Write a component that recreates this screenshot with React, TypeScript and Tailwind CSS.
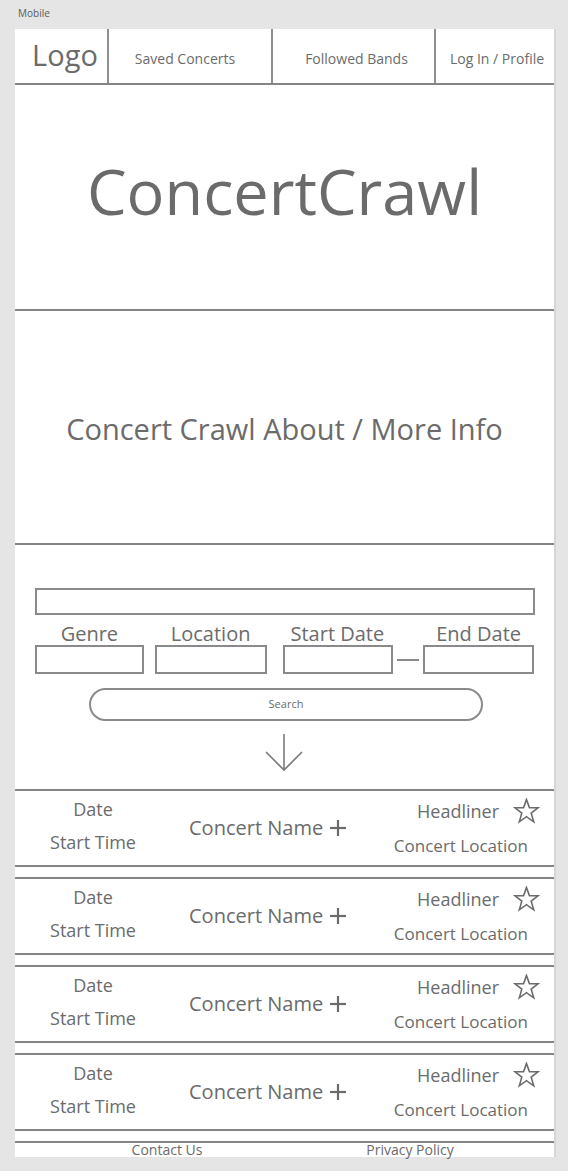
import React from 'react';

const font = { fontFamily: '"Open Sans", "Noto Sans", sans-serif' };

const Star = () => (
  <svg width="27" height="26" viewBox="0 0 27 26" fill="none" stroke="#6b6b6b" strokeWidth="1.6" strokeLinejoin="miter">
    <polygon points="13.5,1.5 16.4,9.6 25,9.8 18.2,15.1 20.7,23.8 13.5,18.7 6.3,23.8 8.8,15.1 2,9.8 10.6,9.6" />
  </svg>
);

const Plus = () => (
  <svg width="18" height="18" viewBox="0 0 18 18" stroke="#6b6b6b" strokeWidth="2.2">
    <line x1="9" y1="1" x2="9" y2="17" />
    <line x1="1" y1="9" x2="17" y2="9" />
  </svg>
);

const ConcertRow = () => (
  <div className="flex h-[78px] border-y-2 border-[#858585] mb-[10px]">
    <div className="flex w-[156px] flex-col items-center pt-[6px] gap-[9px] text-[18px] leading-[24px]">
      <span>Date</span>
      <span>Start Time</span>
    </div>
    <div className="flex flex-1 items-center gap-[6px] pl-[18px] pb-[1px] text-[20px]">
      <span>Concert Name</span>
      <Plus />
    </div>
    <div className="flex flex-col items-end pt-[7px] pr-[14px] gap-[10px] leading-[24px]">
      <div className="flex items-center gap-[14px] text-[18px]">
        <span>Headliner</span>
        <Star />
      </div>
      <span className="mr-[12px] text-[17px]">Concert Location</span>
    </div>
  </div>
);

const SmallBox = ({ w }: { w: string }) => (
  <div className={`h-[29px] border-2 border-[#8a8a8a] ${w}`} />
);

export default function App() {
  return (
    <div className="min-h-screen bg-[#e5e5e5] text-[#6b6b6b]" style={font}>
      <div className="h-[29px] pl-[18px] pt-[6px] text-[10px] leading-[14px] text-[#5a5a5a]">Mobile</div>
      <div className="ml-[15px] w-[541px] bg-white border-r-2 border-[#d6d6d6]">
        {/* header */}
        <div className="flex h-[56px] border-b-2 border-[#858585]">
          <div className="flex w-[94px] items-center justify-center border-r-2 border-[#8f8f8f] pl-[8px] pb-[3px] text-[29px]">
            Logo
          </div>
          <div className="flex w-[164px] items-center justify-center border-r-2 border-[#8f8f8f] pr-[10px] pt-[4px] text-[14px]">
            Saved Concerts
          </div>
          <div className="flex w-[163px] items-center justify-center border-r-2 border-[#8f8f8f] pl-[6px] pt-[4px] text-[14px]">
            Followed Bands
          </div>
          <div className="flex flex-1 items-center justify-center pl-[4px] pt-[4px] text-[14px]">Log In / Profile</div>
        </div>

        {/* hero */}
        <div className="flex h-[226px] items-center justify-center border-b-2 border-[#858585] pb-[12px] text-[63px]">
          ConcertCrawl
        </div>

        {/* about */}
        <div className="flex h-[234px] items-center justify-center border-b-2 border-[#858585] pt-[4px] text-[29px]">
          Concert Crawl About / More Info
        </div>

        {/* search */}
        <div className="flex h-[244px] flex-col px-[20px] pt-[43px]">
          <div className="h-[27px] w-[500px] border-2 border-[#8a8a8a]" />
          <div className="flex h-[30px] items-end text-[20px] leading-[22px]">
            <span className="w-[109px] text-center">Genre</span>
            <span className="ml-[11px] w-[112px] text-center">Location</span>
            <span className="ml-[16px] w-[110px] text-center">Start Date</span>
            <span className="ml-[31px] w-[111px] text-center">End Date</span>
          </div>
          <div className="flex items-center">
            <SmallBox w="w-[109px]" />
            <div className="ml-[11px]">
              <SmallBox w="w-[112px]" />
            </div>
            <div className="ml-[16px]">
              <SmallBox w="w-[110px]" />
            </div>
            <div className="mx-[4px] h-[2px] w-[23px] bg-[#8a8a8a]" />
            <SmallBox w="w-[111px]" />
          </div>
          <div className="ml-[54px] mt-[14px] flex h-[33px] w-[394px] items-center justify-center rounded-full border-2 border-[#8a8a8a] text-[11px]">
            Search
          </div>
          <div className="mt-[12px] flex justify-center pr-[1px]">
            <svg width="40" height="39" viewBox="0 0 40 39" fill="none" stroke="#7a7a7a" strokeWidth="1.6">
              <line x1="20" y1="1" x2="20" y2="37" />
              <polyline points="2,19 20,37 38,19" />
            </svg>
          </div>
        </div>

        {/* concerts */}
        <ConcertRow />
        <ConcertRow />
        <ConcertRow />
        <ConcertRow />

        {/* footer */}
        <div className="flex h-[16px] border-t-2 border-[#858585] text-[14px] leading-[14px]">
          <span className="w-[304px] text-center">Contact Us</span>
          <span className="w-[182px] text-center">Privacy Policy</span>
        </div>
      </div>
    </div>
  );
}
